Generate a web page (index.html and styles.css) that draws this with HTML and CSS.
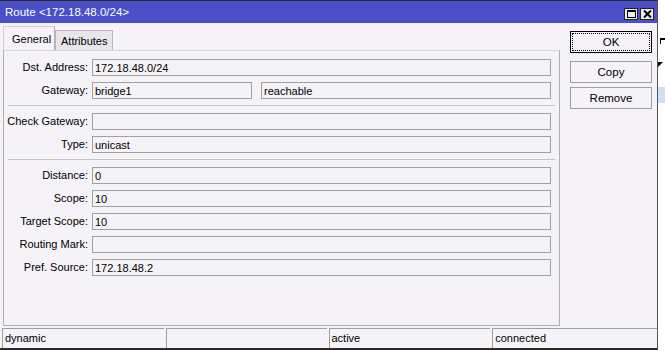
FILE: index.html
```html
<!DOCTYPE html>
<html lang="en">
<head>
  <meta charset="UTF-8" />
  <title>Route &lt;172.18.48.0/24&gt;</title>
  <link rel="stylesheet" href="styles.css">
</head>
<body>
  <div class="desktop">
    <div class="window">
      <div class="titlebar">
        <span class="title">Route &lt;172.18.48.0/24&gt;</span>
        <div class="winbtns">
          <span class="winbtn">
            <svg width="9" height="8" viewBox="0 0 9 8"><rect x="0.5" y="0.5" width="8" height="7" fill="none" stroke="#000" stroke-width="1"/><line x1="0" y1="1.5" x2="9" y2="1.5" stroke="#000" stroke-width="1"/></svg>
          </span>
          <span class="winbtn">
            <svg width="9" height="8" viewBox="0 0 9 8"><path d="M1 0.5 L8 7.5 M8 0.5 L1 7.5" stroke="#000" stroke-width="2"/></svg>
          </span>
        </div>
      </div>

      <div class="content">
        <div class="main">
          <div class="tabs">
            <span class="tab active">General</span>
            <span class="tab">Attributes</span>
          </div>
          <div class="panel">
            <div class="row">
              <label>Dst. Address:</label>
              <div class="field">172.18.48.0/24</div>
            </div>
            <div class="row">
              <label>Gateway:</label>
              <div class="field gw">bridge1</div>
              <div class="field gw-state">reachable</div>
            </div>
            <div class="sep"></div>
            <div class="row">
              <label>Check Gateway:</label>
              <div class="field"></div>
            </div>
            <div class="row">
              <label>Type:</label>
              <div class="field">unicast</div>
            </div>
            <div class="sep"></div>
            <div class="row">
              <label>Distance:</label>
              <div class="field">0</div>
            </div>
            <div class="row">
              <label>Scope:</label>
              <div class="field">10</div>
            </div>
            <div class="row">
              <label>Target Scope:</label>
              <div class="field">10</div>
            </div>
            <div class="row">
              <label>Routing Mark:</label>
              <div class="field"></div>
            </div>
            <div class="row">
              <label>Pref. Source:</label>
              <div class="field">172.18.48.2</div>
            </div>
          </div>
        </div>

        <div class="side">
          <button class="btn ok"><span>OK</span></button>
          <button class="btn copy">Copy</button>
          <button class="btn">Remove</button>
        </div>
      </div>

      <div class="statusbar">
        <div class="cell c1">dynamic</div>
        <div class="cell c2"></div>
        <div class="cell c3">active</div>
        <div class="cell c4">connected</div>
      </div>
    </div>

    <div class="behind">
      <span class="mark-tick"></span>
      <span class="mark-tri"></span>
      <span class="mark-sel"></span>
    </div>
  </div>
</body>
</html>
```

FILE: styles.css
```css
* {
  box-sizing: border-box;
}
html, body {
  margin: 0;
  padding: 0;
  background: #fff;
  font-family: "Liberation Sans", Arial, sans-serif;
  font-size: 11px;
  color: #000;
}
.desktop {
  display: flex;
  width: 665px;
  height: 351px;
  overflow: hidden;
}
.window {
  width: 658px;
  height: 350px;
  background: #f5f3f7;
  border-top: 1px solid #2a2a2a;
  border-right: 1px solid #555;
  border-bottom: 2px solid #2a2a2a;
  display: flex;
  flex-direction: column;
}
.titlebar {
  height: 22px;
  flex-shrink: 0;
  background: #4b50c8;
  color: #fff;
  display: flex;
  align-items: center;
  justify-content: space-between;
  padding: 0 3px 0 5px;
}
.title {
  font-size: 11.5px;
}
.winbtns {
  display: flex;
  gap: 2px;
  margin-top: 3px;
}
.winbtn {
  width: 14px;
  height: 12px;
  background: #ececec;
  border: 1px solid #222;
  display: flex;
  align-items: center;
  justify-content: center;
}
.content {
  flex: 1;
  display: flex;
}
.main {
  width: 561px;
  padding: 3px 0 0 3px;
  display: flex;
  flex-direction: column;
}
.tabs {
  display: flex;
  align-items: flex-end;
  height: 24px;
  flex-shrink: 0;
}
.tab {
  height: 20px;
  padding: 0 5px;
  background: #e8e6ea;
  border: 1px solid #b8b8b8;
  border-bottom: none;
  display: flex;
  align-items: center;
}
.tab.active {
  height: 24px;
  width: 52px;
  padding: 0 0 0 8px;
  background: #f5f3f7;
  border-color: #d0d0d0;
  border-right: 1px solid #b0b0b0;
}
.panel {
  width: 557px;
  height: 276px;
  flex-shrink: 0;
  border: 1px solid #b0b0b0;
  border-top-color: #d8d8d8;
  padding: 8px 0 0 0;
  display: flex;
  flex-direction: column;
  gap: 7px;
}
.row {
  display: flex;
  align-items: center;
  height: 16px;
}
.row label {
  width: 88px;
  text-align: right;
  padding-right: 4px;
  flex-shrink: 0;
}
.field {
  width: 459px;
  height: 17px;
  border: 1px solid #a0a0a0;
  background: #f5f3f7;
  padding: 1px 0 0 2px;
  line-height: 14px;
  white-space: nowrap;
}
.field.gw {
  width: 160px;
}
.field.gw-state {
  width: 290px;
  margin-left: 9px;
}
.sep {
  height: 1px;
  margin: 0 4px;
  background: #c4c4c4;
}
.side {
  display: flex;
  flex-direction: column;
  padding: 8px 0 0 9px;
}
.btn {
  width: 82px;
  height: 22px;
  border: 1px solid #a0a0a0;
  background: #f5f3f7;
  font-family: "Liberation Sans", Arial, sans-serif;
  font-size: 11.5px;
  color: #000;
  padding: 0;
}
.btn.ok {
  border: 1px solid #000;
  padding: 1px;
}
.btn.ok span {
  display: flex;
  align-items: center;
  justify-content: center;
  height: 100%;
  border: 1px dotted #000;
}
.btn.copy {
  margin-top: 8px;
  margin-bottom: 4px;
}
.statusbar {
  height: 20px;
  flex-shrink: 0;
  display: flex;
  gap: 2px;
  padding-left: 2px;
  margin-top: 1px;
}
.cell {
  height: 20px;
  border-top: 1px solid #a0a0a0;
  border-left: 1px solid #a0a0a0;
  padding: 3px 0 0 2px;
  white-space: nowrap;
}
.c1 { width: 162px; }
.c2 { width: 161px; }
.c3 { width: 162px; }
.c4 { width: 165px; }
.behind {
  flex: 1;
  display: flex;
  flex-direction: column;
  padding-top: 38px;
}
.mark-tick {
  height: 6px;
  width: 6px;
  margin-left: 2px;
  border-top: 2px solid #000;
  border-left: 1px solid #000;
}
.mark-tri {
  width: 0;
  height: 0;
  margin-top: 18px;
  border-top: 5px solid #000;
  border-right: 5px solid transparent;
}
.mark-sel {
  height: 16px;
  margin-top: 20px;
  background: #cfe0f5;
}
```
